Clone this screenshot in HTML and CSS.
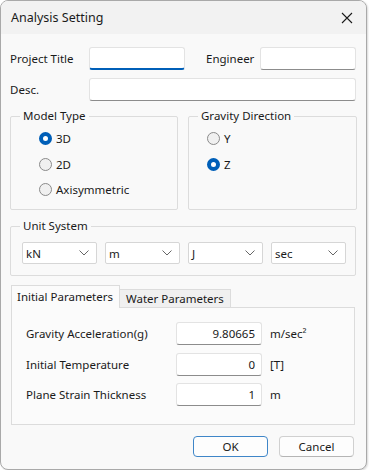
FILE: index.html
```html
<!DOCTYPE html>
<html lang="en">
<head>
    <meta charset="UTF-8">
    <title>Analysis Setting</title>
    <link rel="stylesheet" href="styles.css">
</head>
<body>
    <div class="window">
        <div class="titlebar">
            <span class="title">Analysis Setting</span>
            <svg class="close" width="12" height="12" viewBox="0 0 12 12">
                <path d="M1 1 L11 11 M11 1 L1 11" stroke="#1b1b1b" stroke-width="1.1" fill="none"/>
            </svg>
        </div>

        <div class="content">
            <div class="info-grid">
                <label class="lbl">Project Title</label>
                <div class="field focused"></div>
                <label class="lbl eng">Engineer</label>
                <div class="field"></div>
                <label class="lbl">Desc.</label>
                <div class="field wide"></div>
            </div>

            <div class="groups">
                <fieldset class="group model">
                    <legend>Model Type</legend>
                    <div class="group-body">
                        <div class="radio checked"><span class="dot"></span>3D</div>
                        <div class="radio"><span class="dot"></span>2D</div>
                        <div class="radio"><span class="dot"></span>Axisymmetric</div>
                    </div>
                </fieldset>
                <fieldset class="group gravity">
                    <legend>Gravity Direction</legend>
                    <div class="group-body">
                        <div class="radio"><span class="dot"></span>Y</div>
                        <div class="radio checked"><span class="dot"></span>Z</div>
                    </div>
                </fieldset>
            </div>

            <fieldset class="group units">
                <legend>Unit System</legend>
                <div class="select-row">
                    <div class="select"><span>kN</span><svg width="10" height="6" viewBox="0 0 10 6"><path d="M0.5 0.5 L5 5 L9.5 0.5" stroke="#666" stroke-width="1" fill="none"/></svg></div>
                    <div class="select"><span>m</span><svg width="10" height="6" viewBox="0 0 10 6"><path d="M0.5 0.5 L5 5 L9.5 0.5" stroke="#666" stroke-width="1" fill="none"/></svg></div>
                    <div class="select"><span>J</span><svg width="10" height="6" viewBox="0 0 10 6"><path d="M0.5 0.5 L5 5 L9.5 0.5" stroke="#666" stroke-width="1" fill="none"/></svg></div>
                    <div class="select"><span>sec</span><svg width="10" height="6" viewBox="0 0 10 6"><path d="M0.5 0.5 L5 5 L9.5 0.5" stroke="#666" stroke-width="1" fill="none"/></svg></div>
                </div>
            </fieldset>

            <div class="tabs">
                <div class="tab active">Initial Parameters</div>
                <div class="tab">Water Parameters</div>
            </div>
            <div class="tab-panel">
                <div class="param">
                    <span class="param-name">Gravity Acceleration(g)</span>
                    <div class="num">9.80665</div>
                    <span class="unit">m/sec²</span>
                </div>
                <div class="param">
                    <span class="param-name">Initial Temperature</span>
                    <div class="num">0</div>
                    <span class="unit">[T]</span>
                </div>
                <div class="param">
                    <span class="param-name">Plane Strain Thickness</span>
                    <div class="num">1</div>
                    <span class="unit">m</span>
                </div>
            </div>

            <div class="buttons">
                <button class="btn default">OK</button>
                <button class="btn">Cancel</button>
            </div>
        </div>
    </div>
</body>
</html>
```

FILE: styles.css
```css
body {
    margin: 0;
    background: #ffffff;
    font-family: "Segoe UI", "Noto Sans", sans-serif;
    font-size: 11.5px;
    color: #1a1a1a;
}

.window {
    width: 367px;
    height: 470px;
    box-sizing: border-box;
    border: 1px solid #a9a9a9;
    border-radius: 8px;
    overflow: hidden;
    background: #f9f9f9;
    box-shadow: 1px 1px 2px rgba(0, 0, 0, 0.15);
}

.titlebar {
    height: 33px;
    background: #f2f2f2;
    display: flex;
    align-items: center;
    justify-content: space-between;
    padding: 0 13px 0 10px;
}

.title {
    font-size: 12.5px;
    color: #1b1b1b;
}

.content {
    padding: 13px 9px 0 9px;
}

/* top text fields */
.info-grid {
    display: grid;
    grid-template-columns: 79px 96px 75px 96px;
    row-gap: 8px;
    align-items: center;
}

.lbl {
    white-space: nowrap;
}

.lbl.eng {
    padding-left: 21px;
}

.field {
    height: 23px;
    box-sizing: border-box;
    background: #fff;
    border: 1px solid #e3e3e3;
    border-bottom-color: #8c8c8c;
    border-radius: 3px;
}

.field.focused {
    border-bottom: 2px solid #005fb8;
}

.field.wide {
    grid-column: 2 / 5;
}

/* group boxes */
.groups {
    display: flex;
    gap: 10px;
    margin-top: 7px;
}

.group {
    margin: 0;
    border: 1px solid #dcdcdc;
    border-radius: 2px;
    padding: 0;
    box-sizing: border-box;
}

.group legend {
    margin-left: 9px;
    padding: 0 3px;
    line-height: 16px;
}

.model {
    width: 168px;
    height: 102px;
}

.model .group-body {
    padding: 6px 0 0 28px;
}

.gravity {
    width: 169px;
    height: 102px;
}

.gravity .group-body {
    padding: 6px 0 0 18px;
}

.radio {
    display: flex;
    align-items: center;
    gap: 4px;
    height: 17px;
    margin-bottom: 8.5px;
}

.dot {
    width: 13px;
    height: 13px;
    box-sizing: border-box;
    border-radius: 50%;
    border: 1px solid #8a8a8a;
    background: #f0f0f0;
}

.radio.checked .dot {
    border: 4px solid #005fb8;
    background: #fff;
}

.units {
    margin-top: 8px;
    width: 346px;
    height: 58px;
}

.select-row {
    display: flex;
    gap: 8px;
    padding: 8px 0 0 11px;
}

.select {
    width: 75px;
    height: 22px;
    box-sizing: border-box;
    background: #fff;
    border: 1px solid #d6d6d6;
    border-radius: 2px;
    display: flex;
    align-items: center;
    justify-content: space-between;
    padding: 0 7px 0 3px;
}

/* tabs */
.tabs {
    display: flex;
    align-items: flex-end;
    margin-top: 9px;
    height: 22px;
    padding-left: 1px;
}

.tab {
    height: 18px;
    box-sizing: border-box;
    padding: 0 6px;
    border: 1px solid #dcdcdc;
    border-bottom: none;
    background: #f0f0f0;
    line-height: 17px;
}

.tab.active {
    height: 23px;
    width: 109px;
    padding: 2px 0 0 5px;
    background: #fbfbfb;
    margin-bottom: -1px;
    position: relative;
    z-index: 1;
}

.tab.active + .tab {
    border-left: none;
}

.tab-panel {
    margin-left: 1px;
    width: 344px;
    height: 118px;
    box-sizing: border-box;
    border: 1px solid #dcdcdc;
    background: #fbfbfb;
    padding: 14px 0 0 14px;
    display: flex;
    flex-direction: column;
    gap: 7.5px;
}

.param {
    display: flex;
    align-items: center;
}

.param-name {
    width: 150px;
    white-space: nowrap;
}

.num {
    width: 86px;
    height: 23px;
    box-sizing: border-box;
    background: #fff;
    border: 1px solid #e3e3e3;
    border-bottom-color: #8c8c8c;
    border-radius: 3px;
    text-align: right;
    padding-right: 6px;
    line-height: 21px;
}

.unit {
    margin-left: 8px;
}

/* dialog buttons */
.buttons {
    display: flex;
    justify-content: flex-end;
    gap: 11px;
    margin-top: 11px;
    padding-right: 3px;
}

.btn {
    width: 75px;
    height: 21px;
    font-family: inherit;
    font-size: 11.5px;
    color: #1a1a1a;
    background: #fdfdfd;
    border: 1px solid #d0d0d0;
    border-bottom-color: #b5b5b5;
    border-radius: 4px;
    padding: 0;
}

.btn.default {
    border: 1px solid #3f86c8;
}
```
